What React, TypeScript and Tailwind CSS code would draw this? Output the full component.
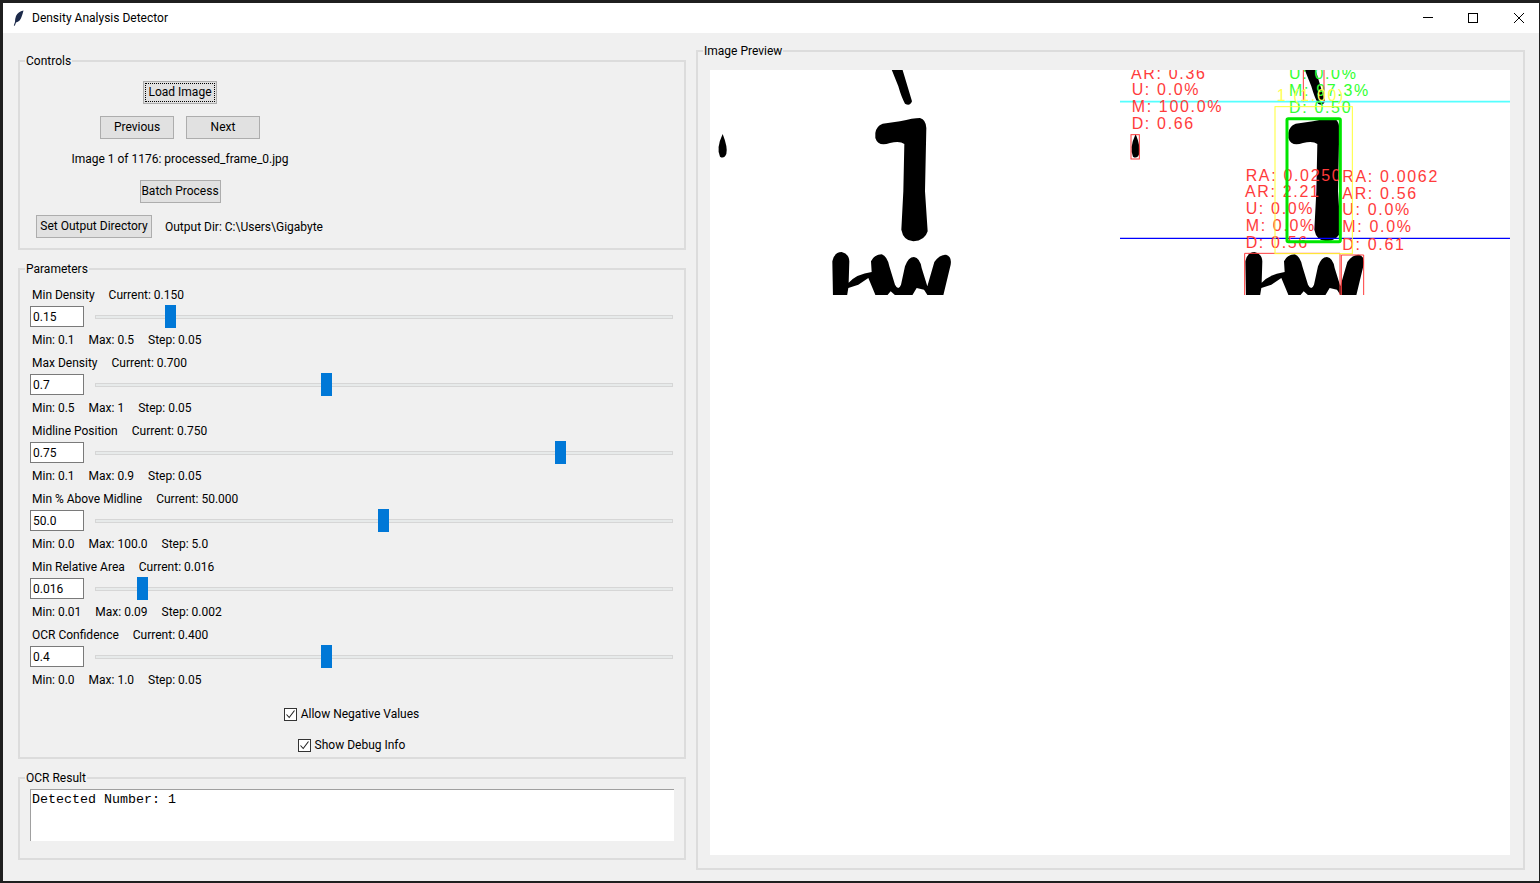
import React from 'react';

interface Param {
  name: string;
  current: string;
  value: string;
  min: string;
  max: string;
  step: string;
  num: number;
  lo: number;
  hi: number;
}

const params: Param[] = [
  { name: 'Min Density', current: '0.150', value: '0.15', min: '0.1', max: '0.5', step: '0.05', num: 0.15, lo: 0.1, hi: 0.5 },
  { name: 'Max Density', current: '0.700', value: '0.7', min: '0.5', max: '1', step: '0.05', num: 0.7, lo: 0.5, hi: 1 },
  { name: 'Midline Position', current: '0.750', value: '0.75', min: '0.1', max: '0.9', step: '0.05', num: 0.75, lo: 0.1, hi: 0.9 },
  { name: 'Min % Above Midline', current: '50.000', value: '50.0', min: '0.0', max: '100.0', step: '5.0', num: 50, lo: 0, hi: 100 },
  { name: 'Min Relative Area', current: '0.016', value: '0.016', min: '0.01', max: '0.09', step: '0.002', num: 0.016, lo: 0.01, hi: 0.09 },
  { name: 'OCR Confidence', current: '0.400', value: '0.4', min: '0.0', max: '1.0', step: '0.05', num: 0.4, lo: 0, hi: 1 },
];

// track is 578 wide, thumb 11
const thumbLeft = (p: Param) => Math.floor(((p.num - p.lo) / (p.hi - p.lo)) * 567 + 0.01);

const Btn = ({ children, w, focus }: { children: React.ReactNode; w: string; focus?: boolean }) => (
  <button className={`${w} relative h-[23px] shrink-0 border border-[#adadad] bg-[#e1e1e1] text-center leading-[21px] text-black`}>
    {focus && <span className="absolute inset-[1px] border border-dotted border-black" />}
    {children}
  </button>
);

const Check = ({ label }: { label: string }) => (
  <div className="flex h-[16px] items-center justify-center gap-[4px]">
    <span className="flex h-[13px] w-[13px] items-center justify-center border border-[#333333] bg-white">
      <svg width="11" height="11" viewBox="0 0 11 11" fill="none">
        <path d="M1.5 5.5 L4.2 8.5 L9.5 1.5" stroke="#222222" strokeWidth="1.1" />
      </svg>
    </span>
    <span>{label}</span>
  </div>
);

const Row = ({ p }: { p: Param }) => (
  <div className="mb-[7px]">
    <div className="flex h-[16px] items-center gap-[14px] pl-[2px]">
      <span>{p.name}</span>
      <span>Current: {p.current}</span>
    </div>
    <div className="mt-[2px] flex h-[23px] items-center">
      <input
        readOnly
        value={p.value}
        className="h-[21px] w-[54px] border border-[#7a7a7a] bg-white px-[2px] text-black outline-none"
      />
      <div className="relative ml-[11px] h-[4px] flex-1 border border-[#d6d6d6] bg-[#e7eaea]">
        <div
          className="absolute top-[-11px] h-[23px] w-[11px] bg-[#0078d7]"
          style={{ left: thumbLeft(p) - 1 }}
        />
      </div>
    </div>
    <div className="mt-[4px] flex h-[16px] items-center gap-[14px] pl-[2px]">
      <span>Min: {p.min}</span>
      <span>Max: {p.max}</span>
      <span>Step: {p.step}</span>
    </div>
  </div>
);

const Frame = ({ title, className, children }: { title: string; className: string; children: React.ReactNode }) => (
  <fieldset className={`${className} border-2 border-[#dcdcdc]`}>
    <legend className="ml-[5px] h-[16px] px-[1px] leading-[16px]">{title}</legend>
    {children}
  </fieldset>
);

// glyphs traced from the scan, coords are 3x screen
const Glyphs = ({ transform }: { transform: string }) => (
  <g transform={transform} fill="#000000">
    <path d="M68 228 Q84 268 79 288 Q72 304 60 296 Q48 270 68 228 Z" />
    <path d="M573 30 L606 30 L636 130 Q630 146 615 137 Q605 120 595 85 Z" />
    <path d="M526 225 Q528 205 548 197 L600 190 Q640 180 660 180 Q678 185 679 210 L675 400 L683 520 Q675 548 640 550 Q610 548 604 515 L610 400 L613 258 Q600 248 570 255 Q535 268 526 240 Z" />
    <path d="M399 720 L397 610 Q402 583 425 582 Q447 587 448 610 L446 674 Q470 648 515 642 L513 610 Q522 590 545 589 Q562 595 568 625 L585 680 Q595 700 603 680 L615 625 Q625 597 642 597 Q660 600 665 630 L682 685 L703 612 Q718 590 738 590 Q756 595 752 620 L728 720 L688 720 L672 695 L650 690 L632 720 L595 720 L572 700 L555 720 L530 720 L505 660 L475 680 L445 690 L440 720 Z" />
  </g>
);

const redText: [string, number, number][] = [
  ['AR: 0.36', 63, 62],
  ['U: 0.0%', 65, 112],
  ['M: 100.0%', 65, 162],
  ['D: 0.66', 65, 212],
  ['RA: 0.0250', 407, 370],
  ['AR: 2.21', 405, 418],
  ['U: 0.0%', 407, 468],
  ['M: 0.0%', 407, 518],
  ['D: 0.56', 407, 570],
  ['RA: 0.0062', 697, 372],
  ['AR: 0.56', 697, 422],
  ['U: 0.0%', 697, 472],
  ['M: 0.0%', 697, 522],
  ['D: 0.61', 697, 575],
];

const greenText: [string, number, number][] = [
  ['U: 0.0%', 537, 62],
  ['M: 97.3%', 537, 115],
  ['D: 0.50', 537, 165],
];

const Preview = () => (
  <svg width="800" height="225" viewBox="0 0 800 225" className="block">
    <Glyphs transform="translate(-10,-12) scale(0.33333)" />
    <Glyphs transform="translate(403,-12) scale(0.33333)" />
    <g transform="translate(400,-12) scale(0.33333)" fontFamily="'Liberation Sans', sans-serif" fontSize="48" letterSpacing="5">
      <line x1="30" x2="1200" y1="131" y2="131" stroke="#55ffff" strokeWidth="5" />
      <line x1="30" x2="1200" y1="541" y2="541" stroke="#0000ff" strokeWidth="4" />
      {redText.map(([t, x, y]) => (
        <text key={`${t}${x}${y}`} x={x} y={y} fill="#ff3b3b">
          {t}
        </text>
      ))}
      {greenText.map(([t, x, y]) => (
        <text key={`${t}${x}${y}`} x={x} y={y} fill="#33ff33">
          {t}
        </text>
      ))}
      <path d="M580 36 V130 M642 36 V130" stroke="#ff3b3b" strokeWidth="3" fill="none" />
      <rect x="63" y="230" width="25" height="73" stroke="#ff3b3b" strokeWidth="3" fill="none" />
      <path d="M404 720 V586 H690 V720 M694 720 V591 H761 V720" stroke="#ff3b3b" strokeWidth="3" fill="none" />
      <rect x="531" y="182" width="160" height="369" rx="4" stroke="#00e600" strokeWidth="9" fill="none" />
      <rect x="495" y="146" width="232" height="441" stroke="#ffff33" strokeWidth="3" fill="none" />
      <text x="500" y="130" fill="#ffff55">
        1 (1.00)
      </text>
    </g>
  </svg>
);

export default function App() {
  return (
    <div className="h-[883px] w-[1540px] overflow-hidden bg-[#1f1f1f] pb-[2px] pl-[3px] pr-[1px] pt-[3px] font-['Roboto',sans-serif] text-[12px] leading-[16px] text-black">
      <div className="flex h-[878px] flex-col bg-[#f0f0f0]">
        {/* title bar */}
        <div className="flex h-[30px] shrink-0 items-center bg-white">
          <svg width="12" height="16" viewBox="0 0 12 16" className="ml-[10px]">
            <path d="M10.5 0.5 Q5 1.5 3 6 Q1.8 9.5 2 12 L0.8 15.5 L1.8 15.7 L3 12.6 Q7 11.5 8.5 7 Q9.8 3.5 10.5 0.5 Z" fill="#1c2a4a" />
          </svg>
          <span className="ml-[7px]">Density Analysis Detector</span>
          <div className="ml-auto flex items-center">
            <svg width="10" height="10" viewBox="0 0 10 10" className="mr-[35px]">
              <path d="M0 4.5 H10" stroke="#000" strokeWidth="1" />
            </svg>
            <svg width="10" height="10" viewBox="0 0 10 10" className="mr-[36px]">
              <rect x="0.5" y="0.5" width="9" height="9" stroke="#000" fill="none" />
            </svg>
            <svg width="10" height="10" viewBox="0 0 10 10" className="mr-[15px]">
              <path d="M0 0 L10 10 M10 0 L0 10" stroke="#000" strokeWidth="1" />
            </svg>
          </div>
        </div>

        <div className="flex gap-[10px] pl-[15px] pt-[10px]">
          {/* left column */}
          <div className="flex w-[668px] flex-col gap-[11px] pt-[10px]">
            <Frame title="Controls" className="h-[197px]">
              <div className="ml-[16px] flex w-[288px] flex-col items-center gap-[12px] pt-[12px]">
                <Btn w="w-[74px]" focus>
                  Load Image
                </Btn>
                <div className="flex gap-[12px]">
                  <Btn w="w-[74px]">Previous</Btn>
                  <Btn w="w-[74px]">Next</Btn>
                </div>
                <div className="h-[17px] leading-[17px]">Image 1 of 1176: processed_frame_0.jpg</div>
                <Btn w="w-[81px]">Batch Process</Btn>
                <div className="flex w-full items-center gap-[13px]">
                  <Btn w="w-[116px]">Set Output Directory</Btn>
                  <span className="whitespace-nowrap">Output Dir: C:\Users\Gigabyte</span>
                </div>
              </div>
            </Frame>

            <Frame title="Parameters" className="h-[498px]">
              <div className="pl-[10px] pr-[11px] pt-[10px]">
                {params.map((p) => (
                  <Row key={p.name} p={p} />
                ))}
                <div className="flex flex-col gap-[15px] pt-[11px]">
                  <Check label="Allow Negative Values" />
                  <Check label="Show Debug Info" />
                </div>
              </div>
            </Frame>

            <Frame title="OCR Result" className="h-[90px]">
              <div className="ml-[10px] mr-[10px] mt-[3px] h-[52px] border-l border-t border-[#a0a0a0] bg-white pl-[1px] pt-[1px] font-['Liberation_Mono',monospace] text-[13.33px] leading-[17px]">
                Detected Number: 1
              </div>
            </Frame>
          </div>

          {/* image preview */}
          <Frame title="Image Preview" className="h-[827px] w-[829px]">
            <div className="ml-[12px] mt-[11px] h-[785px] w-[800px] bg-white">
              <Preview />
            </div>
          </Frame>
        </div>
      </div>
    </div>
  );
}
